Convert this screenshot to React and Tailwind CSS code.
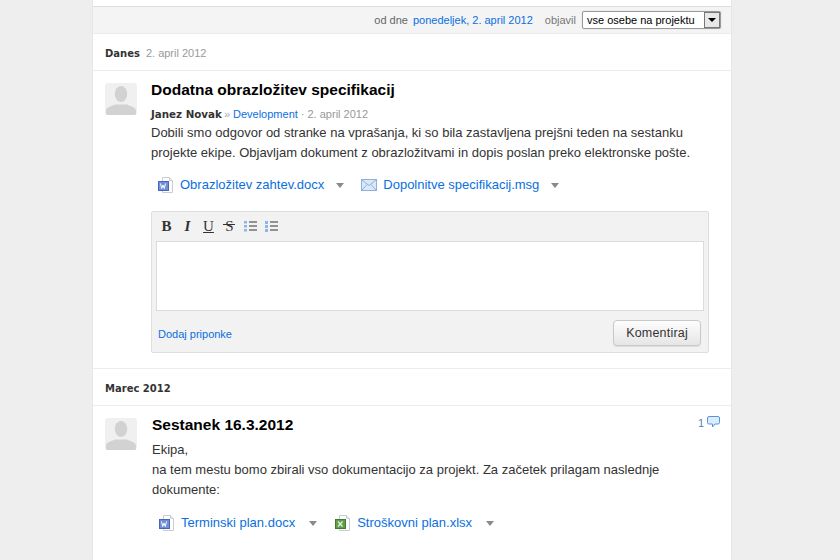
const Avatar = () => (
  <div className="w-8 h-8 shrink-0 rounded-[3px] bg-[#f0f0f0] overflow-hidden">
    <svg width="32" height="32" viewBox="0 0 32 32">
      <ellipse cx="16" cy="11" rx="6.2" ry="8" fill="#d2d2d2" />
      <path d="M1 32v-4c0-4 5-4.500 9-6.500h12c4 2 9 2.500 9 6.500v4z" fill="#d2d2d2" />
    </svg>
  </div>
);

const DocFrame = ({ children }) => (
  <svg width="16" height="16" viewBox="0 0 16 16" className="shrink-0">
    <path d="M4.500 0.500h7l3 3v12h-10z" fill="#fff" stroke="#c9ccd2" />
    <path d="M11.500 0.500v3h3" fill="#eef0f3" stroke="#c9ccd2" />
    {children}
  </svg>
);

const WordIcon = () => (
  <DocFrame>
    <rect x="0.500" y="4.500" width="10" height="9" fill="#6f8fd8" stroke="#4a65b5" />
    <path d="M2.500 6.500l1.200 5 1.300-3.500 1.300 3.500 1.200-5" fill="none" stroke="#fff" strokeWidth="1" />
  </DocFrame>
);

const ExcelIcon = () => (
  <DocFrame>
    <rect x="0.500" y="4.500" width="10" height="9" fill="#5f9e4a" stroke="#3e7d2c" />
    <path d="M3 6.500l4.500 5M7.500 6.500l-4.500 5" fill="none" stroke="#e8f5e0" strokeWidth="1.200" />
  </DocFrame>
);

const MailIcon = () => (
  <svg width="16" height="12" viewBox="0 0 16 12" className="shrink-0">
    <rect x="0.500" y="0.500" width="15" height="11" fill="#dbe8f8" stroke="#8db0dc" />
    <path d="M1 1l7 5.500 7-5.500M1 11l5-5.500M15 11l-5-5.500" fill="none" stroke="#8db0dc" />
  </svg>
);

const Attachment = ({ icon, name, gap, arrowGap = "ml-3" }) => (
  <div className={`flex items-center ${gap}`}>
    {icon}
    <a className="ml-[6px] text-[#0a6fe0] text-[13px] leading-4">{name}</a>
    <span className={`${arrowGap} w-0 h-0 border-x-[4px] border-x-transparent border-t-[5px] border-t-[#8a8a8a]`} />
  </div>
);

const DateHead = ({ title, date, className }) => (
  <div className={`flex items-center px-3 pt-[2px] border-b border-[#ececec] ${className}`}>
    <span className="font-['DejaVu_Sans'] font-bold text-[10px] text-[#333]">{title}</span>
    {date && <span className="ml-[6px] text-[#999] text-[11px]">{date}</span>}
  </div>
);

const ListIcon = ({ ordered }) => (
  <svg width="13" height="13" viewBox="0 0 13 13">
    {[1, 5, 9].map((y) => (
      <g key={y}>
        <rect x="0" y={y} width="3" height={ordered ? 3 : 2.500} fill="#8fb4e8" />
        <rect x="5" y={y + 0.500} width="8" height="1" fill="#333" />
      </g>
    ))}
  </svg>
);

const ToolButton = ({ children }) => (
  <span className="w-[21px] flex justify-center items-center text-[#333]">{children}</span>
);

const App = () => {
  return (
    <div className="h-[560px] overflow-hidden bg-[#eeeeee] font-['Liberation_Sans',Arial,sans-serif]">
      <div className="ml-[93px] w-[638px] h-[560px] bg-white shadow-[0_0_2px_#d8d8d8]">
        {/* filter bar */}
        <div className="pt-[6px]">
          <div className="h-[28px] flex items-center justify-end pr-[10px] bg-[#f4f4f4] border-y border-b-[#ececec] border-t-[#dedede] text-[11px]">
            <span className="text-[#666]">od dne</span>
            <a className="ml-[5px] text-[#0a6fe0]">ponedeljek, 2. april 2012</a>
            <span className="ml-[12px] text-[#777]">objavil</span>
            <div className="ml-[6px] w-[139px] h-[18px] flex items-center justify-between bg-white border border-[#9a9a9a] rounded-[2px] pl-1 text-black text-[11px] shadow-[0_0_1px_#bbb]">
              <span>vse osebe na projektu</span>
              <span className="w-4 h-4 flex items-center justify-center bg-[#e8e8e8] border border-[#777]">
                <span className="w-0 h-0 border-x-[4px] border-x-transparent border-t-[4px] border-t-black" />
              </span>
            </div>
          </div>
        </div>

        <DateHead title="Danes" date="2. april 2012" className="h-[37px]" />

        {/* first post */}
        <div className="flex px-3 pt-3 h-[298px] border-b border-[#ececec]">
          <Avatar />
          <div className="ml-[14px] w-[558px]">
            <h2 className="font-bold text-[15.5px] leading-[14px] text-black">Dodatna obrazložitev specifikacij</h2>
            <div className="mt-[10px] leading-[14px] flex items-center text-[11px]">
              <span className="font-['DejaVu_Sans'] font-bold text-[10.300px] text-[#333]">Janez Novak</span>
              <span className="ml-[2px] text-[#9ab]">»</span>
              <a className="ml-[3px] text-[#0a6fe0]">Development</a>
              <span className="ml-[3px] text-[#99a]">·</span>
              <span className="ml-[3px] text-[#999]">2. april 2012</span>
            </div>
            <p className="mt-[2px] text-[13px] leading-5 text-[#333]">
              Dobili smo odgovor od stranke na vprašanja, ki so bila zastavljena prejšni teden na sestanku projekte ekipe. Objavljam dokument z obrazložitvami in dopis poslan preko elektronske pošte.
            </p>
            <div className="flex items-center mt-[14px] ml-[7px] h-4">
              <Attachment icon={<WordIcon />} name="Obrazložitev zahtev.docx" />
              <Attachment icon={<MailIcon />} name="Dopolnitve specifikacij.msg" gap="ml-[17px]" />
            </div>
            {/* comment box */}
            <div className="mt-[18px] h-[142px] bg-[#f2f2f2] border border-[#dedede] rounded-[2px] px-1">
              <div className="h-[29px] flex items-center">
                <ToolButton><span className="font-['Liberation_Serif'] font-bold text-[15px]">B</span></ToolButton>
                <ToolButton><span className="font-['Liberation_Serif'] font-bold italic text-[15px]">I</span></ToolButton>
                <ToolButton><span className="font-['Liberation_Serif'] underline text-[15px]">U</span></ToolButton>
                <ToolButton>
                  <span className="relative font-['Liberation_Serif'] text-[15px]">
                    S
                    <span className="absolute -left-[2px] top-[9px] w-[12px] h-px bg-[#333]" />
                  </span>
                </ToolButton>
                <ToolButton><ListIcon /></ToolButton>
                <ToolButton><ListIcon ordered /></ToolButton>
              </div>
              <div className="h-[70px] bg-white border border-[#dcdcdc]" />
              <div className="flex items-center justify-between mt-[9px] pl-[2px] pr-[3px]">
                <a className="pt-[3px] text-[#0a6fe0] text-[11px]">Dodaj priponke</a>
                <button className="w-[88px] h-[26px] text-[12.500px] text-[#333] tracking-[0.2px] border border-[#c8c8c8] rounded-[4px] bg-gradient-to-b from-[#fdfdfd] to-[#e6e6e6] shadow-[0_1px_1px_#ddd]">
                  Komentiraj
                </button>
              </div>
            </div>
          </div>
        </div>

        <DateHead title="Marec 2012" className="h-[37px]" />

        {/* second post */}
        <div className="flex px-3 pt-3">
          <Avatar />
          <div className="ml-[15px] w-[569px] relative">
            <h2 className="font-bold text-[15.5px] leading-[14px] text-black">Sestanek 16.3.2012</h2>
            <div className="absolute -right-[1px] -top-[6px] flex items-center gap-[3px] text-[11px] text-[#5a7fae]">
              <span className="mt-[3px]">1</span>
              <svg width="13" height="12" viewBox="0 0 13 12">
                <path d="M2 .500h9a1.500 1.500 0 0 1 1.500 1.500v4.500a1.500 1.500 0 0 1-1.500 1.500H8l-2.500 3V8H2A1.500 1.500 0 0 1 .500 6.500V2A1.500 1.500 0 0 1 2 .500z" fill="#dcecff" stroke="#5b94d8" />
              </svg>
            </div>
            <p className="mt-[8px] text-[13px] leading-5 text-[#333]">
              Ekipa,<br />
              na tem mestu bomo zbirali vso dokumentacijo za projekt. Za začetek prilagam naslednje dokumente:
            </p>
            <div className="flex items-center mt-[15px] ml-[7px] h-4">
              <Attachment icon={<WordIcon />} name="Terminski plan.docx" arrowGap="ml-[14px]" />
              <Attachment icon={<ExcelIcon />} name="Stroškovni plan.xlsx" gap="ml-[18px]" arrowGap="ml-[14px]" />
            </div>
          </div>
        </div>
      </div>
    </div>
  );
};

export default App;
